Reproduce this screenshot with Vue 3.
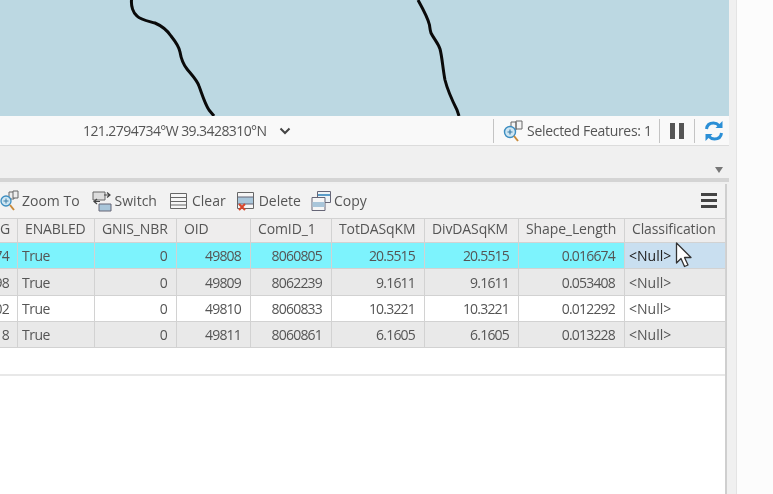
<template>
  <div class="screen">
    <div class="main">
      <svg class="map" viewBox="0 0 729 116" width="729" height="116">
        <path
          v-for="(line, i) in rivers"
          :key="i"
          :d="line"
          fill="none"
          stroke="#0a0a0a"
          stroke-width="3"
          stroke-linejoin="round"
        />
      </svg>

      <div class="status">
        <span class="coords">121.2794734°W 39.3428310°N</span>
        <svg class="chevron" width="12" height="8" viewBox="0 0 12 8">
          <path d="M1.5 1.5 6 6l4.5-4.5" fill="none" stroke="#444" stroke-width="2" />
        </svg>
        <span class="sep first"></span>
        <svg class="sel-icon" width="20" height="24" viewBox="0 0 20 24">
          <path d="M8 3h5v8H8zM13 2h6v8h-6z" fill="#f4f4f4" stroke="#666" />
          <circle cx="7" cy="13" r="5.5" fill="#cfe6f2" stroke="#3c8dc0" stroke-width="1.4" />
          <path d="M4.5 13h5M7 10.500v5" stroke="#3c7ea8" stroke-width="1.200" />
          <path d="m11 17 4 5" stroke="#c98a3a" stroke-width="2" />
        </svg>
        <span class="selected">Selected Features: 1</span>
        <span class="sep"></span>
        <span class="pause"><i></i><i></i></span>
        <span class="sep"></span>
        <svg class="refresh" width="20" height="22" viewBox="0 0 20 22">
          <path d="M2.500 9C3 5 6 3 9.500 3c2.500 0 4 .8 5.500 2.500" fill="none" stroke="#2b8fd6" stroke-width="3" />
          <path d="M18.500 1v7h-7z" fill="#2b8fd6" />
          <path d="M17.500 13c-.5 4-3.500 6-7 6-2.500 0-4-.8-5.500-2.500" fill="none" stroke="#2b8fd6" stroke-width="3" />
          <path d="M1.500 21v-7h7z" fill="#2b8fd6" />
        </svg>
      </div>

      <div class="band">
        <span class="drop"></span>
      </div>

      <div class="panel">
        <div class="toolbar">
          <div v-for="tool in tools" :key="tool.label" class="tool" :class="tool.cls">
            <svg width="20" height="22" viewBox="0 0 20 22" v-html="tool.icon"></svg>
            <span>{{ tool.label }}</span>
          </div>
          <div class="menu"><i></i><i></i><i></i></div>
        </div>

        <table class="grid">
          <colgroup>
            <col v-for="(w, i) in widths" :key="i" :style="{ width: w + 'px' }" />
          </colgroup>
          <thead>
            <tr>
              <th class="cut">G</th>
              <th v-for="h in headers" :key="h">{{ h }}</th>
            </tr>
          </thead>
          <tbody>
            <tr v-for="(row, i) in rows" :key="row.oid" :class="'row' + i">
              <td class="num cut">{{ row.tail }}</td>
              <td class="bool">True</td>
              <td class="num">0</td>
              <td class="num">{{ row.oid }}</td>
              <td class="num">{{ row.com }}</td>
              <td class="num">{{ row.area }}</td>
              <td class="num">{{ row.area }}</td>
              <td class="num">{{ row.len }}</td>
              <td class="null">&lt;Null&gt;</td>
            </tr>
          </tbody>
        </table>
        <div class="rest"></div>
      </div>
    </div>
    <div class="strip"></div>

    <svg class="cursor" width="18" height="27" viewBox="0 0 18 27">
      <path d="M1.500 1v20l4.500-4.500 3.500 8 3.500-1.500-3.500-7.500h6.500z" fill="#fff" stroke="#333" stroke-width="1.300" stroke-linejoin="round" />
    </svg>
  </div>
</template>

<script setup>
const rivers = [
  'M131.500 0C131 6 133 13 137 16C141 20 148 21 155 23C162 26 167 30 171 36C175 41 179 46 180 52C181 58 183 64 187 69C191 74 197 80 199 86C202 94 205 104 209 110L214 116',
  'M418 0C423 9 428 18 429.500 25C430 29 430 30 431 33C434 39 438 43 440 49C442 56 443 70 445 80C448 92 453 102 457 110L459 116',
]

const tools = [
  {
    label: 'Zoom To',
    cls: 'zoom',
    icon: '<path d="M10 2h5v7h-5z" fill="#eee" stroke="#666"/><path d="M14 1h5v7h-5z" fill="#eee" stroke="#666"/><circle cx="7" cy="11" r="5" fill="#cfe6f2" stroke="#3c8dc0" stroke-width="1.3"/><path d="M4.500 11h5M7 8.500v5" stroke="#3c7ea8"/><path d="m11 15 4 5" stroke="#c98a3a" stroke-width="2"/>',
  },
  {
    label: 'Switch',
    cls: 'switch',
    icon: '<path d="M1 2h12v8H1z" fill="#ddd" stroke="#666"/><path d="M7 14h12v7H7z" fill="#a9c6da" stroke="#667"/><path d="M12 5h6M15 2.500l3 2.500-3 2.500M8 11.500H2M5 9 2 11.500 5 14" fill="none" stroke="#444" stroke-width="1.200"/>',
  },
  {
    label: 'Clear',
    cls: 'clear',
    icon: '<path d="M1.500 3.500h16v15h-16zM1.500 7.500h16M1.500 11.500h16M1.500 15h16" fill="#f6f6f6" stroke="#666"/>',
  },
  {
    label: 'Delete',
    cls: 'delete',
    icon: '<path d="M1.500 2.500h16v16h-16z" fill="#f6f6f6" stroke="#666"/><path d="M2 7h15v7H2z" fill="#a9c6da"/><path d="M1.500 7h16M1.500 14h16" stroke="#667"/><path d="m3 14 6 6M9 14l-6 6" stroke="#d8452a" stroke-width="2"/>',
  },
  {
    label: 'Copy',
    cls: 'copy',
    icon: '<path d="M6.500 1.500h13v11h-13z" fill="#eef3f6" stroke="#667"/><path d="M7 5h12" stroke="#5a9cc8" stroke-width="2"/><path d="M1 7.500h13v13H1z" fill="#f6f6f6" stroke="#667"/><path d="M1.500 12h12v5h-12z" fill="#a9c6da"/>',
  },
]

const widths = [18, 77, 82, 74, 81, 93, 94, 106, 101]
const headers = ['ENABLED', 'GNIS_NBR', 'OID', 'ComID_1', 'TotDASqKM', 'DivDASqKM', 'Shape_Length', 'Classification']

const rows = [
  { tail: '74', oid: 49808, com: 8060805, area: '20.5515', len: '0.016674' },
  { tail: '98', oid: 49809, com: 8062239, area: '9.1611', len: '0.053408' },
  { tail: '02', oid: 49810, com: 8060833, area: '10.3221', len: '0.012292' },
  { tail: '18', oid: 49811, com: 8060861, area: '6.1605', len: '0.013228' },
]
</script>

<style>
html, body {
  margin: 0;
  overflow: hidden;
  background: #fcfcfc;
}
</style>

<style scoped>
.screen {
  position: relative;
  display: flex;
  width: 773px;
  height: 494px;
  overflow: hidden;
  background: #fcfcfc;
  font-family: "Open Sans", "Noto Sans", sans-serif;
  font-size: 14px;
  color: #555;
  filter: blur(0.6px);
}
.main {
  display: flex;
  flex-direction: column;
  width: 729px;
  background: #f0f0f0;
}
.map {
  display: block;
  flex: none;
  background: #bcd8e2;
}
.strip {
  width: 7px;
  background: #f0f0f0;
  border-right: 1px solid #e4e4e4;
}
.status {
  display: flex;
  align-items: center;
  flex: none;
  height: 29px;
  background: #f9f9f9;
  border-bottom: 1px solid #dcdcdc;
}
.coords {
  margin-left: 83px;
  width: 184px;
  white-space: nowrap;
  letter-spacing: -0.58px;
}
.chevron {
  margin-left: 12px;
}
.sep {
  width: 1px;
  height: 24px;
  background: #c4c4c4;
  margin: 0 9px;
}
.sep.first {
  margin: 0 0 0 202px;
}
.sel-icon {
  margin-left: 9px;
}
.selected {
  margin-left: 4px;
  width: 123px;
  white-space: nowrap;
  letter-spacing: -0.3px;
}
.pause {
  display: flex;
  gap: 4px;
  margin: 0 1px;
}
.pause i {
  width: 5px;
  height: 16px;
  background: #555;
}
.band {
  position: relative;
  flex: none;
  height: 32px;
  border-bottom: 4px solid #d4d4d4;
}
.drop {
  position: absolute;
  left: 715px;
  top: 21px;
  border: 4px solid transparent;
  border-top: 6px solid #777;
  border-bottom: 0;
}
.panel {
  flex: 1;
  display: flex;
  flex-direction: column;
  margin-top: 2px;
  width: 727px;
  background: #fff;
  border-right: 2px solid #cfcfcf;
  box-sizing: border-box;
}
.toolbar {
  display: flex;
  align-items: center;
  flex: none;
  height: 34px;
  padding-bottom: 1px;
  box-sizing: border-box;
  background: #f2f2f2;
}
.tool {
  display: flex;
  align-items: center;
  gap: 3px;
  white-space: nowrap;
}
.tool svg {
  flex: none;
}
.zoom {
  margin-left: -1px;
}
.switch {
  margin-left: 12px;
}
.clear {
  margin-left: 12px;
}
.delete {
  margin-left: 10px;
}
.copy {
  margin-left: 10px;
}
.menu {
  display: flex;
  flex-direction: column;
  gap: 3px;
  margin-left: auto;
  margin-right: 8px;
}
.menu i {
  width: 16px;
  height: 3px;
  background: #444;
}
.grid {
  flex: none;
  width: 726px;
  table-layout: fixed;
  border-collapse: separate;
  border-spacing: 0;
  margin-right: -1px;
}
th {
  height: 25px;
  padding: 0 0 3px 7px;
  box-sizing: border-box;
  background: #eeeded;
  border: 1px solid #d2d2d2;
  border-width: 1px 1px 1px 0;
  font-weight: 400;
  text-align: left;
  white-space: nowrap;
  overflow: hidden;
  line-height: 1;
  letter-spacing: -0.12px;
}
td {
  height: 26px;
  box-sizing: border-box;
  padding: 1px 4px 0;
  border: 1px solid #d2d2d2;
  border-width: 0 1px 1px 0;
  white-space: nowrap;
  overflow: hidden;
  line-height: 1;
}
.row1 td {
  height: 27px;
}
th.cut {
  padding: 0 9px 3px 0;
  text-align: right;
}
.bool {
  letter-spacing: -0.5px;
}
.num {
  text-align: right;
  padding-right: 9px;
  letter-spacing: -0.8px;
}
td.cut {
  padding: 1px 9px 0 0;
  direction: rtl;
  text-align: right;
}
.row0 td {
  background: #7df3fd;
}
.row0 td.null {
  background: #c9dff0;
  color: #222;
}
.row1 td,
.row3 td {
  background: #e9e9e9;
}
.row2 td {
  background: #fff;
}
.rest {
  flex: 1;
  margin-top: 26px;
  border-top: 2px solid #e8e8e8;
}
.cursor {
  position: absolute;
  left: 675px;
  top: 242px;
}
</style>
